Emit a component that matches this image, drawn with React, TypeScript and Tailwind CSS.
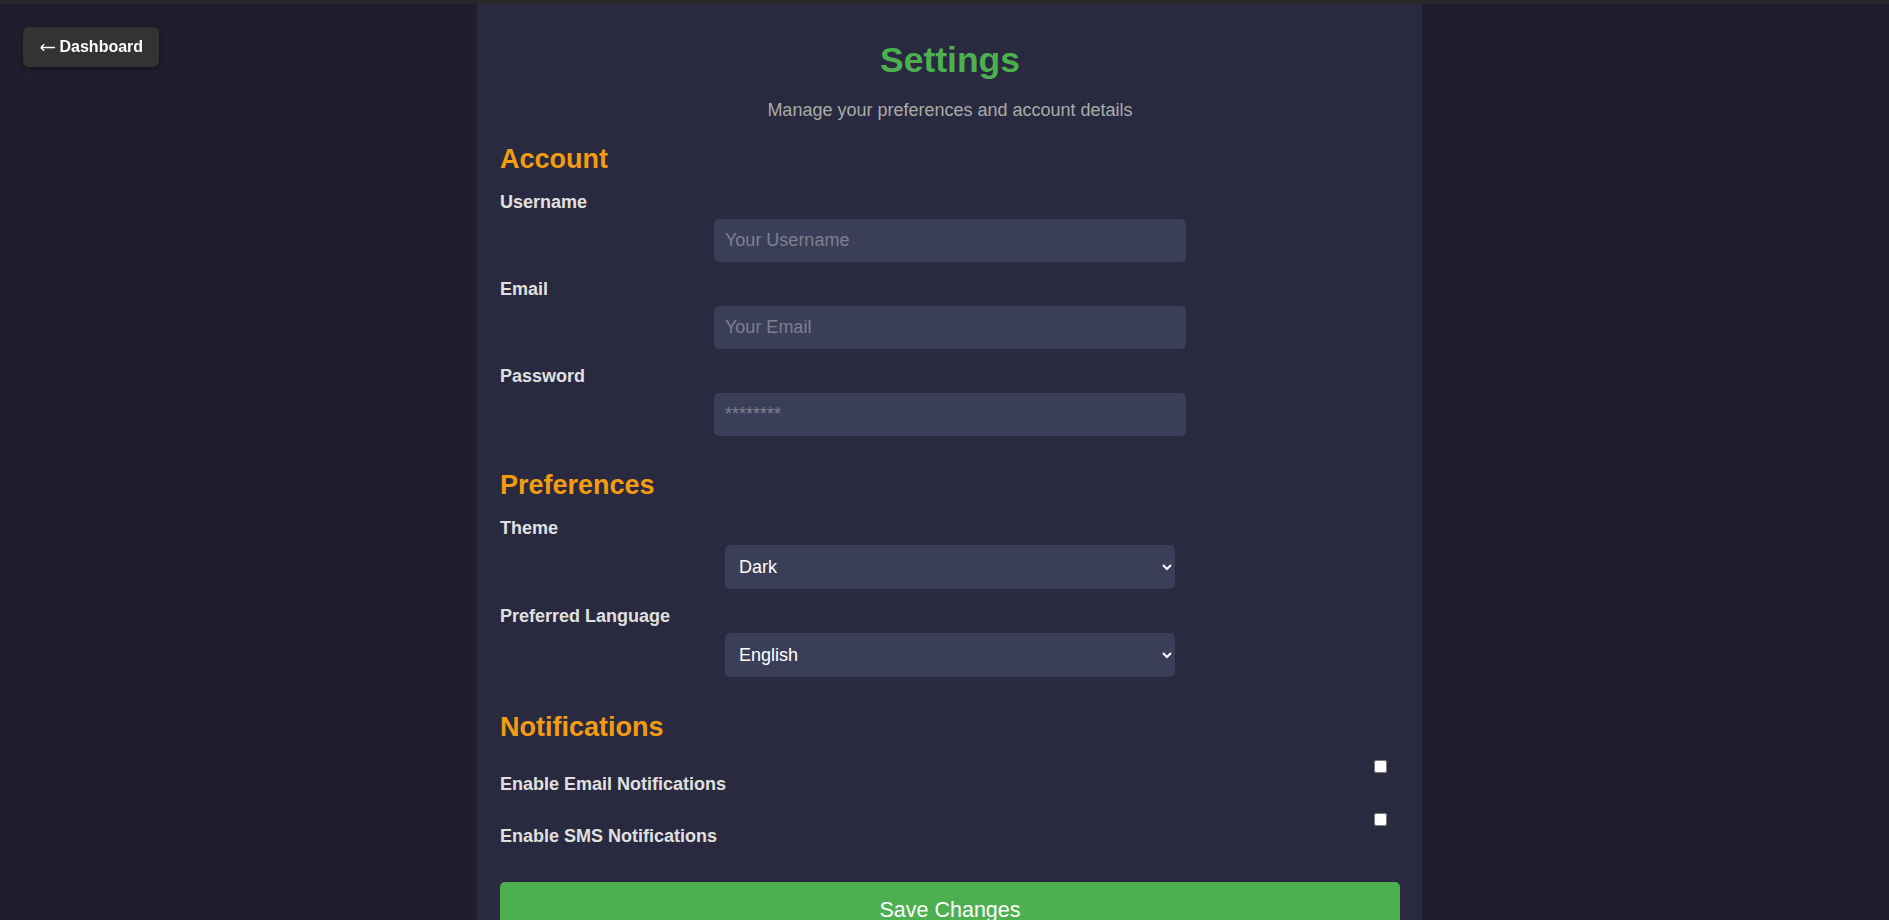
import React from "react";

function Field({ label, placeholder, type = "text" }: { label: string; placeholder: string; type?: string }) {
  return (
    <>
      <label className="mt-[17px] block text-[18px] leading-[20px] font-bold text-[#e0e0e0]">{label}</label>
      <input
        type={type}
        placeholder={placeholder}
        className="mx-auto mt-[7px] block h-[43px] w-[472px] rounded-[5px] bg-[#3b3e58] px-[11px] text-[18px] text-white outline-none placeholder:text-[#7f8090]"
      />
    </>
  );
}

function Choice({ label, value, options }: { label: string; value: string; options: string[] }) {
  return (
    <>
      <label className="mt-[17px] block text-[18px] leading-[20px] font-bold text-[#e0e0e0]">{label}</label>
      <select
        defaultValue={value}
        className="mx-auto mt-[7px] block h-[44px] w-[450px] rounded-[5px] bg-[#3b3e58] px-[10px] text-[18px] text-white outline-none"
      >
        {options.map((o) => (
          <option key={o}>{o}</option>
        ))}
      </select>
    </>
  );
}

function Toggle({ label, first }: { label: string; first?: boolean }) {
  return (
    <div className={`flex items-start justify-between ${first ? "mt-[17px]" : "mt-[19px]"}`}>
      <span className="mt-[13.5px] text-[18px] leading-[20px] font-bold text-[#e0e0e0]">{label}</span>
      <input type="checkbox" className="mr-[13px] h-[13px] w-[13px]" />
    </div>
  );
}

export default function App() {
  return (
    <div className="min-h-screen bg-[#1f1e2e] font-['Liberation_Sans',Arial,sans-serif]">
      <div className="h-[4px] bg-[#29292b]" />

      <button className="fixed top-[27px] left-[23px] flex h-[40px] items-center rounded-[6px] bg-[#333333] pr-[16px] pl-[17px] text-[16px] font-bold text-white shadow-[0_2px_5px_rgba(0,0,0,0.35)]">
        <svg width="15" height="9" viewBox="0 0 15 9" fill="none" stroke="white" strokeWidth="1.3">
          <path d="M0.8 4.5H15M0.8 4.5L4.2 1.2M0.8 4.5L4.2 7.8" />
        </svg>
        <span className="ml-[4.5px]">Dashboard</span>
      </button>

      <div className="flex justify-center pl-[10px]">
        <div className="w-[945px] bg-[#292a3f] pt-[36px] pr-[22px] pb-[40px] pl-[23px]">
          <h1 className="text-center text-[35.5px] leading-[40px] font-bold text-[#4caf50]">Settings</h1>
          <p className="mt-[20px] text-center text-[18px] leading-[20px] text-[#aaaaaa]">
            Manage your preferences and account details
          </p>

          <h2 className="mt-[24px] text-[27px] leading-[31px] font-bold text-[#f39c12]">Account</h2>
          <Field label="Username" placeholder="Your Username" />
          <Field label="Email" placeholder="Your Email" type="email" />
          <Field label="Password" placeholder="********" type="password" />

          <h2 className="mt-[33.5px] text-[27px] leading-[31px] font-bold text-[#f39c12]">Preferences</h2>
          <Choice label="Theme" value="Dark" options={["Dark", "Light"]} />
          <Choice label="Preferred Language" value="English" options={["English", "Spanish", "French"]} />

          <h2 className="mt-[35.5px] text-[27px] leading-[31px] font-bold text-[#f39c12]">Notifications</h2>
          <Toggle label="Enable Email Notifications" first />
          <Toggle label="Enable SMS Notifications" />

          <button className="mt-[36px] block h-[56px] w-full rounded-[5px] bg-[#4caf50] text-[21.5px] text-white">
            Save Changes
          </button>
        </div>
      </div>
    </div>
  );
}
